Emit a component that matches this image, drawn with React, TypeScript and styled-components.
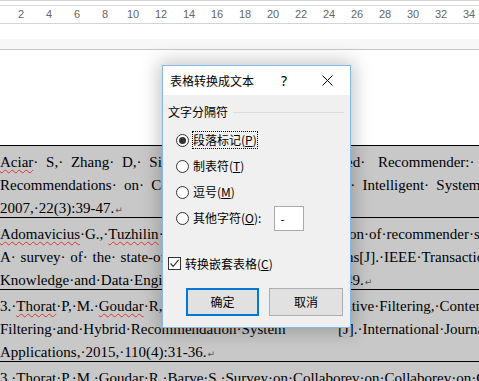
import React from "react";
import styled, { createGlobalStyle } from "styled-components";

const Global = createGlobalStyle`
  html, body { margin: 0; padding: 0; background: #fff; }
  body { width: 479px; height: 381px; overflow: hidden; }
`;

const Page = styled.div`
  position: relative;
  width: 479px;
  height: 381px;
  overflow: hidden;
  background: #fff;
`;

const TopEdge = styled.div`
  height: 5px;
  box-sizing: border-box;
  border-top: 1px solid #d4d4d4;
`;

const Ruler = styled.div`
  display: flex;
  height: 16px;
  padding-left: 7px;
  padding-top: 1px;
  box-sizing: content-box;
  border-top: 1px solid #dadada;
  border-bottom: 1px solid #d4d4d4;
  font-family: "Liberation Sans", Arial, sans-serif;
  font-size: 11px;
  line-height: 15px;
  color: #666;
`;

const Tick = styled.span`
  width: 28px;
  flex: 0 0 28px;
  text-align: center;
`;

const Gap = styled.div`
  height: 15px;
`;

const Band = styled.div`
  height: 10px;
  background: #f7f7f7;
  border-bottom: 1px solid #c6c6c6;
`;

const Blank = styled.div`
  height: 95px;
`;

const Table = styled.div`
  border-top: 1px solid #000;
  background: #c8c8c8;
  font-family: "Liberation Serif", "Times New Roman", serif;
  font-size: 15px;
  color: #000;
`;

const Row = styled.div`
  height: 72px;
  box-sizing: border-box;
  padding-top: 5px;
  border-bottom: 1px solid #000;
`;

const Line = styled.div<{ $split?: number; $ws?: number }>`
  display: grid;
  grid-template-columns: ${(p) => p.$split ?? 700}px max-content;
  height: 23px;
  line-height: 23px;
  white-space: nowrap;
  word-spacing: ${(p) => p.$ws ?? 0}px;
`;

const Left = styled.span`
  min-width: 0;
  overflow: hidden;
`;

const Right = styled.span<{ $ws?: number }>`
  ${(p) => (p.$ws !== undefined ? `word-spacing: ${p.$ws}px;` : "")}
`;

const Spell = styled.span`
  text-decoration: underline wavy #e53030;
  text-decoration-thickness: 1px;
  text-underline-offset: 2px;
  text-decoration-skip-ink: none;
`;

const Ret = styled.span`
  font-family: "DejaVu Sans", sans-serif;
  font-size: 9px;
  color: #555;
  margin-left: 1px;
`;

const Dialog = styled.div`
  position: absolute;
  left: 162px;
  top: 65px;
  width: 189px;
  height: 263px;
  box-sizing: border-box;
  border: 1px solid #86b7e8;
  background: #f0f0f0;
  box-shadow: 0 0 18px 3px rgba(0, 0, 0, 0.24);
  display: flex;
  flex-direction: column;
  font-family: "Noto Sans CJK SC", "Microsoft YaHei", sans-serif;
  font-size: 12px;
  color: #000;
`;

const TitleBar = styled.div`
  height: 29px;
  flex: 0 0 29px;
  background: #fff;
  display: flex;
  align-items: center;
  padding-left: 7px;
`;

const Title = styled.div`
  flex: 1;
  line-height: 16px;
`;

const HelpBtn = styled.div`
  width: 30px;
  text-align: center;
  font-family: "Noto Sans", sans-serif;
  font-size: 14px;
  line-height: 16px;
`;

const CloseBtn = styled.div`
  width: 46px;
  margin-left: 5px;
  display: flex;
  justify-content: center;
  align-items: center;
`;

const Body = styled.div`
  flex: 1;
  display: flex;
  flex-direction: column;
  padding: 9px 6px 10px 5px;
`;

const GroupHeader = styled.div`
  display: flex;
  align-items: center;
  gap: 5px;
  height: 16px;
  line-height: 16px;
`;

const Rule = styled.div`
  flex: 1;
  height: 1px;
  background: #dcdcdc;
`;

const RadioList = styled.div`
  margin-top: 7px;
  padding-left: 8px;
  display: flex;
  flex-direction: column;
`;

const RadioRow = styled.div`
  height: 26px;
  display: flex;
  align-items: center;
  gap: 3px;
`;

const RadioCircle = styled.div<{ $on?: boolean }>`
  width: 13px;
  height: 13px;
  box-sizing: border-box;
  border-radius: 50%;
  border: 1px solid #333;
  background: #fff;
  display: flex;
  align-items: center;
  justify-content: center;
  &::after {
    content: "";
    display: ${(p) => (p.$on ? "block" : "none")};
    width: 7px;
    height: 7px;
    border-radius: 50%;
    background: #333;
  }
`;

const OptLabel = styled.span<{ $focus?: boolean }>`
  padding: 1px;
  line-height: 16px;
  outline: 1px dotted ${(p) => (p.$focus ? "#000" : "transparent")};
  outline-offset: -1px;
`;

const U = styled.span`
  text-decoration: underline;
  text-underline-offset: 1px;
`;

const CharInput = styled.div`
  margin-left: 9px;
  width: 30px;
  height: 25px;
  box-sizing: border-box;
  border: 1px solid #a9a9a9;
  background: #fff;
  padding-left: 5px;
  line-height: 23px;
`;

const CheckRow = styled.div`
  margin-top: 22px;
  height: 20px;
  display: flex;
  align-items: center;
  gap: 4px;
`;

const CheckBox = styled.div`
  width: 13px;
  height: 13px;
  box-sizing: border-box;
  border: 1px solid #333;
  background: #fff;
  display: flex;
  align-items: center;
  justify-content: center;
`;

const ButtonRow = styled.div`
  margin-top: 15px;
  padding-left: 18px;
  display: flex;
  gap: 10px;
`;

const Button = styled.div<{ $primary?: boolean; $w: number }>`
  width: ${(p) => p.$w}px;
  height: 28px;
  box-sizing: border-box;
  background: #e1e1e1;
  border: ${(p) => (p.$primary ? "2px solid #0078d7" : "1px solid #adadad")};
  display: flex;
  align-items: center;
  justify-content: center;
  line-height: 16px;
`;

const ticks = [2, 4, 6, 8, 10, 12, 14, 16, 18, 20, 22, 24, 26, 28, 30, 32, 34];

export default function App() {
  return (
    <Page>
      <Global />
      <TopEdge />
      <Ruler>
        {ticks.map((t) => (
          <Tick key={t}>{t}</Tick>
        ))}
      </Ruler>
      <Gap />
      <Band />
      <Blank />
      <Table>
        <Row>
          <Line $split={346} $ws={4}>
            <Left>
              <Spell>Aciar</Spell>· S,· Zhang· D,· Simoff· S,· et· al.· Inform
            </Left>
            <Right $ws={9}>ed· Recommender:· Basing</Right>
          </Line>
          <Line $split={341} $ws={3.5}>
            <Left>Recommendations· on· Consumer· Product· Reviews[J].· IEE</Left>
            <Right>E· Intelligent· Systems,</Right>
          </Line>
          <Line>
            <Left>
              2007,·22(3):39-47.<Ret>↵</Ret>
            </Left>
          </Line>
        </Row>
        <Row>
          <Line $split={349}>
            <Left>
              <Spell>Adomavicius</Spell>·G.,·<Spell>Tuzhilin</Spell>·A.·Toward·the·next·generati
            </Left>
            <Right>on·of·recommender·systems:</Right>
          </Line>
          <Line $split={346} $ws={1}>
            <Left>A· survey· of· the· state-of-the-art· and· possible· extensio</Left>
            <Right>ns[J].·IEEE·Transactions·on</Right>
          </Line>
          <Line $split={345}>
            <Left>Knowledge·and·Data·Engineering,·2005,·17(6):734-7</Left>
            <Right>
              49.<Ret>↵</Ret>
            </Right>
          </Line>
        </Row>
        <Row>
          <Line $split={345}>
            <Left>
              3.·<Spell>Thorat</Spell>·P,·M.·<Spell>Goudar</Spell>·R,·Barve·S.·Survey·on·Collabor
            </Left>
            <Right>ative·Filtering,·Content-based</Right>
          </Line>
          <Line $split={338}>
            <Left>Filtering·and·Hybrid·Recommendation·System</Left>
            <Right>[J].·International·Journal·of·Computer</Right>
          </Line>
          <Line>
            <Left>
              Applications,·2015,·110(4):31-36.<Ret>↵</Ret>
            </Left>
          </Line>
        </Row>
        <Row>
          <Line>
            <Left>
              3.·<Spell>Thorat</Spell>·P,·M.·<Spell>Goudar</Spell>·R,·Barve·S.·Survey·on·Collaborev·on·Collaborev·on·Content
            </Left>
          </Line>
        </Row>
      </Table>

      <Dialog>
        <TitleBar>
          <Title>表格转换成文本</Title>
          <HelpBtn>?</HelpBtn>
          <CloseBtn>
            <svg width="11" height="11" viewBox="0 0 11 11">
              <path d="M0.5 0.5 L10.5 10.5 M10.5 0.5 L0.5 10.5" stroke="#000" strokeWidth="1" fill="none" />
            </svg>
          </CloseBtn>
        </TitleBar>
        <Body>
          <GroupHeader>
            <span>文字分隔符</span>
            <Rule />
          </GroupHeader>
          <RadioList>
            <RadioRow>
              <RadioCircle $on />
              <OptLabel $focus>
                段落标记(<U>P</U>)
              </OptLabel>
            </RadioRow>
            <RadioRow>
              <RadioCircle />
              <OptLabel>
                制表符(<U>T</U>)
              </OptLabel>
            </RadioRow>
            <RadioRow>
              <RadioCircle />
              <OptLabel>
                逗号(<U>M</U>)
              </OptLabel>
            </RadioRow>
            <RadioRow>
              <RadioCircle />
              <OptLabel>
                其他字符(<U>O</U>):
              </OptLabel>
              <CharInput>-</CharInput>
            </RadioRow>
          </RadioList>
          <CheckRow>
            <CheckBox>
              <svg width="11" height="11" viewBox="0 0 11 11">
                <path d="M1.5 5.5 L4.2 8.3 L9.6 1.8" stroke="#333" strokeWidth="1.2" fill="none" />
              </svg>
            </CheckBox>
            <span>
              转换嵌套表格(<U>C</U>)
            </span>
          </CheckRow>
          <ButtonRow>
            <Button $primary $w={73}>
              确定
            </Button>
            <Button $w={74}>取消</Button>
          </ButtonRow>
        </Body>
      </Dialog>
    </Page>
  );
}
